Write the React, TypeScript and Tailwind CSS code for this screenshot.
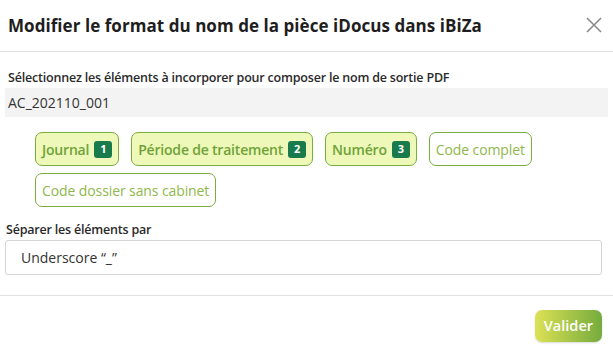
export default function App() {
  const selected = [
    { label: "Journal", n: 1 },
    { label: "Période de traitement", n: 2 },
    { label: "Numéro", n: 3 },
  ];
  const others = ["Code complet", "Code dossier sans cabinet"];

  return (
    <div className="w-[613px] h-[350px] bg-white font-['Open_Sans','Lato',sans-serif] text-[#222] overflow-hidden">
      {/* Header */}
      <div className="h-[52px] flex items-center justify-between pl-[8px] pr-[10px] border-b border-[#e2e2e2]">
        <h1 className="text-[17px] font-bold text-[#1e1e1e] tracking-[0.05px]">
          Modifier le format du nom de la pièce iDocus dans iBiZa
        </h1>
        <svg width="18" height="18" viewBox="0 0 18 18" className="mt-[-2px]">
          <path d="M2 2 L16 16 M16 2 L2 16" stroke="#8a8a8a" strokeWidth="1.6" />
        </svg>
      </div>

      {/* Body */}
      <div className="px-[5px] pt-[17px]">
        <div className="px-[3px] text-[12.5px] font-semibold text-[#2a2a2a] leading-[17px] tracking-[-0.2px]">
          Sélectionnez les éléments à incorporer pour composer le nom de sortie PDF
        </div>
        <div className="mt-[2px] h-[29px] bg-[#f3f3f3] flex items-center px-[3px] text-[14px] text-[#333]">
          AC_202110_001
        </div>

        <div className="pl-[30px] pr-[40px] pt-[15px] flex flex-wrap gap-x-[12px] gap-y-[7px]">
          {selected.map((s) => (
            <div
              key={s.n}
              className="h-[34px] flex items-center gap-[5px] px-[6px] rounded-[7px] border border-[#7aac3e] bg-[#eef8b8] text-[14px] font-semibold text-[#6fa33a] tracking-[-0.2px]"
            >
              <span>{s.label}</span>
              <span className="w-[18px] h-[17px] rounded-[3px] bg-[#197a4c] text-white text-[11px] font-bold flex items-center justify-center">
                {s.n}
              </span>
            </div>
          ))}
          {others.map((o) => (
            <div
              key={o}
              className="h-[34px] flex items-center px-[6px] rounded-[7px] border border-[#7aac3e] bg-white text-[14px] text-[#8fb84c] tracking-[-0.1px]"
            >
              {o}
            </div>
          ))}
        </div>

        <div className="mt-[14px] px-[1px] text-[12.5px] font-semibold text-[#2a2a2a] leading-[17px] tracking-[-0.2px]">
          Séparer les éléments par
        </div>
        <div className="mt-[2px] mr-[6px] h-[35px] rounded-[3px] border border-[#d4d4d4] flex items-center px-[15px] text-[14px] text-[#333]">
          Underscore “_”
        </div>
      </div>

      {/* Footer */}
      <div className="mt-[20px] border-t border-[#e2e2e2] pt-[14px] pr-[11px] flex justify-end">
        <button className="h-[32px] px-[9px] rounded-[7px] bg-gradient-to-r from-[#dce254] to-[#75ab3e] text-white text-[14.5px] font-semibold shadow-[0_1px_2px_rgba(0,0,0,0.15)]">
          Valider
        </button>
      </div>
    </div>
  );
}
